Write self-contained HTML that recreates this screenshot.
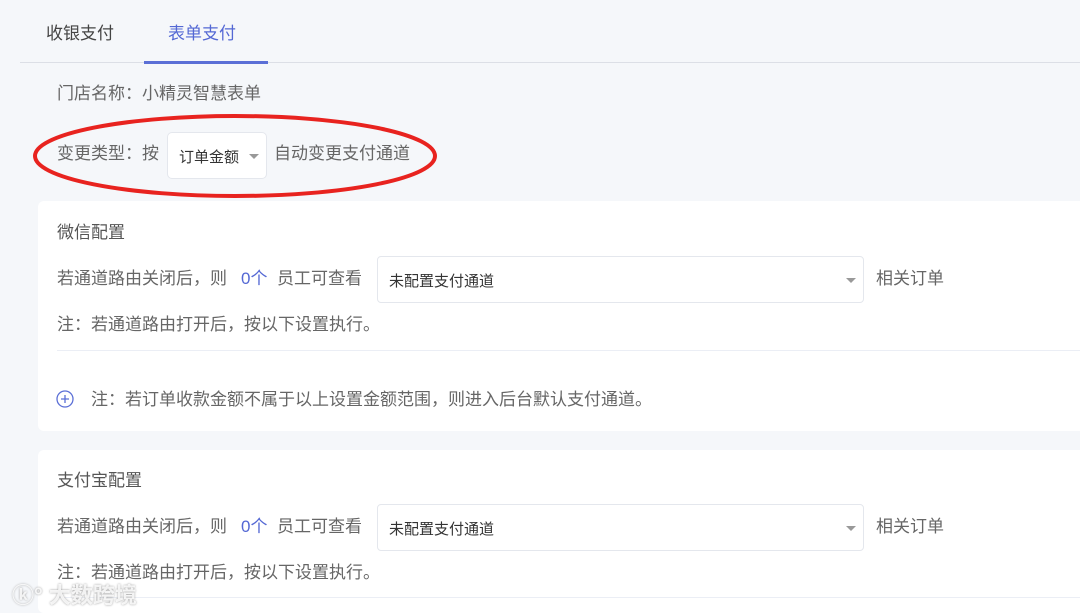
<!DOCTYPE html>
<html style="height:613px;overflow:hidden"><head><meta charset="utf-8"><style>
body{margin:0;width:1080px;height:613px;background:#f5f7fa;overflow:hidden;position:relative;font-family:"Liberation Sans","Noto Sans CJK SC",sans-serif;color:#666;}
.a{position:absolute;white-space:nowrap;}
.t{font-size:17px;line-height:20px;}
.card{position:absolute;left:38px;width:1060px;background:#fff;border-radius:6px;overflow:hidden}
.sel{position:absolute;background:#fff;border:1px solid #e4e7ed;border-radius:4px;font-size:14px;color:#333;box-sizing:border-box;}
.arr{position:absolute;width:0;height:0;border-left:5px solid transparent;border-right:5px solid transparent;border-top:5px solid #999;}
.blue{color:#5468d4}
</style></head><body>
<div class="a t" style="left:46px;top:24px;color:#444">收银支付</div>
<div class="a t blue" style="left:168px;top:24px">表单支付</div>
<div class="a" style="left:20px;top:62px;width:1060px;height:1px;background:#dcdfe6"></div>
<div class="a" style="left:144px;top:61px;width:124px;height:3px;background:#5b6fd6"></div>
<div class="a t" style="left:57px;top:84px">门店名称：小精灵智慧表单</div>
<div class="a t" style="left:57px;top:144px">变更类型：按</div>
<div class="sel" style="left:167px;top:132px;width:100px;height:47px;border-radius:5px;"><span class="a" style="left:11px;top:13px;font-size:15px">订单金额</span><span class="arr" style="left:81px;top:21px"></span></div>
<div class="a t" style="left:274px;top:144px">自动变更支付通道</div>
<svg class="a" style="left:30px;top:112px" width="410" height="88"><ellipse cx="205" cy="44" rx="200" ry="40" fill="none" stroke="#e8231f" stroke-width="4"/></svg>

<div class="card" style="top:201px;height:230px">
<div class="a t" style="left:19px;top:22px;color:#555">微信配置</div>
<div class="a t" style="left:19px;top:68px">若通道路由关闭后，则</div>
<div class="a t blue" style="left:203px;top:68px">0个</div>
<div class="a t" style="left:239px;top:68px">员工可查看</div>
<div class="sel" style="left:339px;top:55px;width:487px;height:47px"><span class="a" style="left:11px;top:13px;font-size:15px">未配置支付通道</span><span class="arr" style="left:468px;top:21px"></span></div>
<div class="a t" style="left:838px;top:68px">相关订单</div>
<div class="a t" style="left:19px;top:114px">注：若通道路由打开后，按以下设置执行。</div>
<div class="a" style="left:19px;top:149px;width:1040px;height:1px;background:#ebeef5"></div>
<svg class="a" style="left:18px;top:189px" width="18" height="18"><circle cx="9" cy="9" r="8" fill="none" stroke="#5b6fd6" stroke-width="1.3"/><path d="M9 5v8M5 9h8" stroke="#5b6fd6" stroke-width="1.3"/></svg>
<div class="a t" style="left:53px;top:189px">注：若订单收款金额不属于以上设置金额范围，则进入后台默认支付通道。</div>
</div>

<div class="card" style="top:450px;height:163px">
<div class="a t" style="left:19px;top:21px;color:#555">支付宝配置</div>
<div class="a t" style="left:19px;top:67px">若通道路由关闭后，则</div>
<div class="a t blue" style="left:203px;top:67px">0个</div>
<div class="a t" style="left:239px;top:67px">员工可查看</div>
<div class="sel" style="left:339px;top:54px;width:487px;height:47px"><span class="a" style="left:11px;top:13px;font-size:15px">未配置支付通道</span><span class="arr" style="left:468px;top:21px"></span></div>
<div class="a t" style="left:838px;top:67px">相关订单</div>
<div class="a t" style="left:19px;top:113px">注：若通道路由打开后，按以下设置执行。</div>
<div class="a" style="left:19px;top:147px;width:1040px;height:1px;background:#ebeef5"></div>
</div>
<div class="a" style="left:12px;top:578px;font-size:22px;color:rgba(255,255,255,0.85);text-shadow:0 0 2px #999;font-weight:bold">ⓚ° 大数跨境</div>
</body></html>
